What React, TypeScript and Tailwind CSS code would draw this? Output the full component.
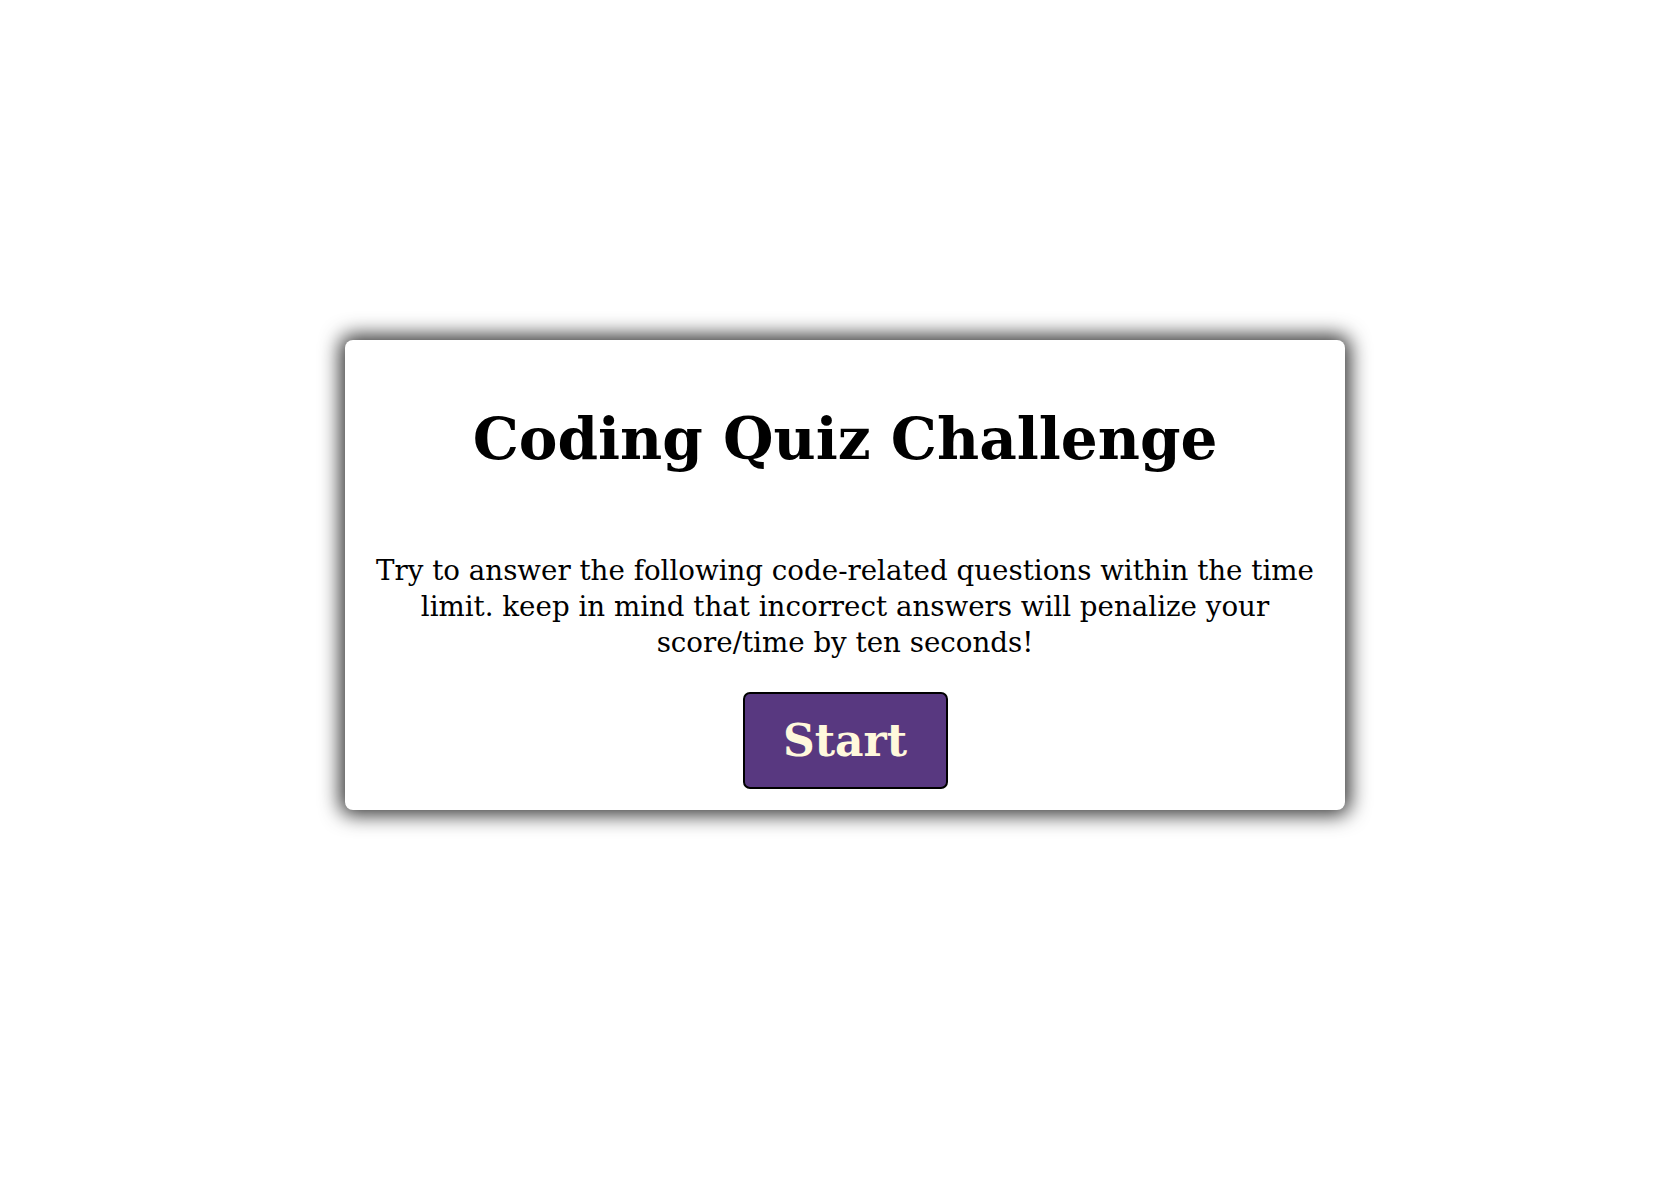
export default function App() {
  return (
    <div className="min-h-screen bg-white pt-[340px] pl-4 font-['DejaVu_Serif',serif]">
      <div className="mx-auto flex h-[470px] w-[1000px] flex-col items-center rounded-lg bg-white px-[30px] shadow-[0_0_20px_5px_rgba(0,0,0,0.8)]">
        <h1 className="mt-[63px] text-[58px] font-bold leading-[72px] text-black">
          Coding Quiz Challenge
        </h1>
        <p className="mt-[78px] text-center text-[27.7px] leading-[36px] text-black">
          Try to answer the following code-related questions within the time limit. keep in mind that incorrect answers will penalize your score/time by ten seconds!
        </p>
        <button className="mt-[31px] h-[97px] w-[205px] rounded-[7px] border-2 border-black bg-[#583880] text-[44px] font-bold text-[#fff8dc]">
          Start
        </button>
      </div>
    </div>
  );
}
